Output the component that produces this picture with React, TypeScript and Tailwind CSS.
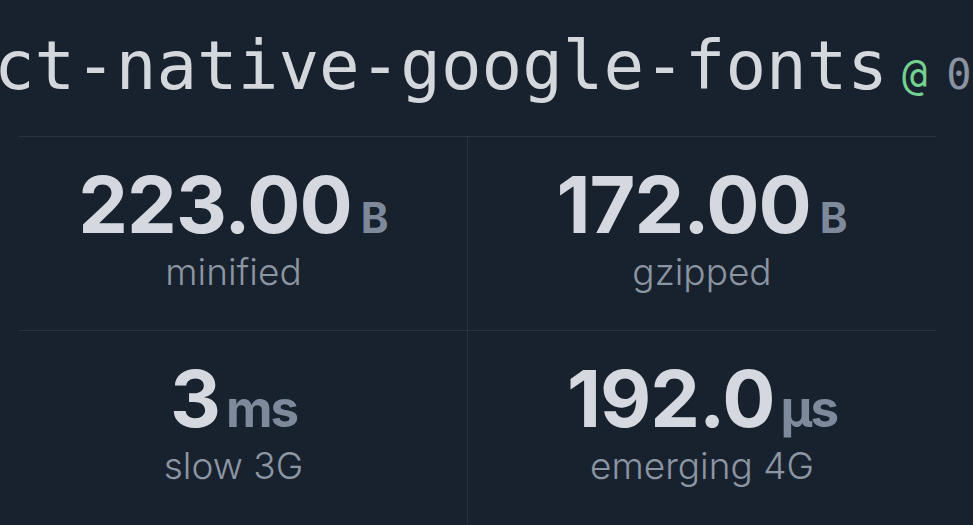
import React from "react"

type StatItem = { value: string; unit: string; label: string }

const stats: { big: boolean; items: StatItem[] }[] = [
  {
    big: false,
    items: [
      { value: "223.00", unit: "B", label: "minified" },
      { value: "172.00", unit: "B", label: "gzipped" },
    ],
  },
  {
    big: true,
    items: [
      { value: "3", unit: "ms", label: "slow 3G" },
      { value: "192.0", unit: "µs", label: "emerging 4G" },
    ],
  },
]

function Stat({ value, unit, label, big }: StatItem & { big: boolean }) {
  return (
    <div className="flex flex-col items-center">
      <div className="flex items-baseline">
        <span className="text-[79px] font-bold leading-none tracking-[-1px] text-[#d5d9df]">{value}</span>
        {big ? (
          <span className="ml-[6px] text-[51px] font-bold leading-none tracking-[-2px] text-[#7e8a9b]">{unit}</span>
        ) : (
          <span className="ml-[9px] text-[42px] font-bold leading-none text-[#7e8a9b]">{unit}</span>
        )}
      </div>
      <span className="mt-[9px] text-[37px] font-light leading-none text-[#8c95a2]">{label}</span>
    </div>
  )
}

export default function App() {
  return (
    <div className="h-[525px] w-full overflow-hidden bg-[#18222f] font-['Inter',sans-serif]">
      {/* package name, wider than the window */}
      <div className="flex overflow-hidden whitespace-nowrap pt-[32px] pb-[36px]">
        <h1 className="ml-[-128px] flex shrink-0 items-baseline font-['DejaVu_Sans_Mono',monospace] leading-none">
          <span className="text-[67.5px] text-[#d4d8dd]">react-native-google-fonts</span>
          <span className="ml-[14px] text-[42px] text-[#74d18f]">@</span>
          <span className="ml-[19px] text-[42px] text-[#8a93a0]">0.1.0</span>
        </h1>
      </div>

      {/* stats */}
      <div className="w-[936px]">
        {stats.map((row, i) => (
          <div key={i}>
            <div className="ml-[19px] h-px bg-[#283240]" />
            <div className="flex">
              {row.items.map((s, j) => (
                <div
                  key={s.label}
                  className={`flex h-[193px] w-1/2 items-start justify-center pt-[28px] ${j === 0 ? "border-r border-[#283240]" : ""}`}
                >
                  <Stat {...s} big={row.big} />
                </div>
              ))}
            </div>
          </div>
        ))}
      </div>
    </div>
  )
}
